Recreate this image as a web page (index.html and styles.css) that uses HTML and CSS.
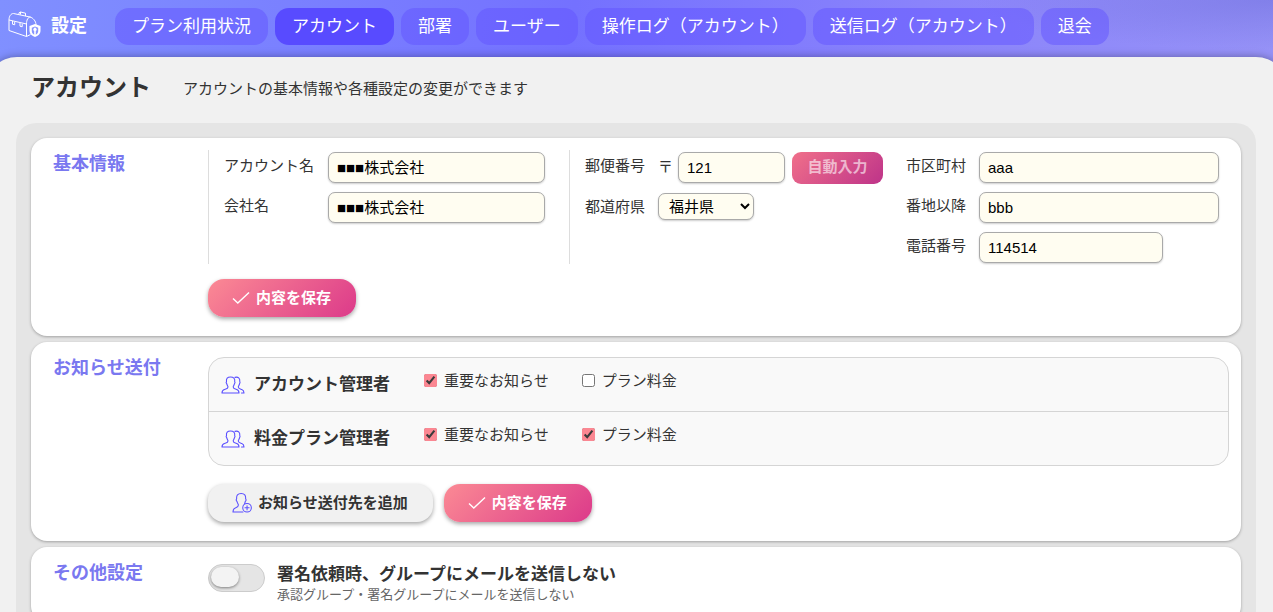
FILE: index.html
```html
<!DOCTYPE html>
<html lang="ja">
<head>
<meta charset="utf-8">
<title>設定 - アカウント</title>
<link rel="stylesheet" href="styles.css">
</head>
<body>
<svg class="defs" aria-hidden="true">
  <symbol id="check" viewBox="0 0 18 14"><path d="M1 7.500 5.800 12 17 1.500" fill="none" stroke="currentColor" stroke-width="1.400"/></symbol>
  <symbol id="users" viewBox="0 0 24 18">
    <g fill="none" stroke="currentColor" stroke-width="1.100" stroke-linejoin="round" stroke-linecap="round">
      <path d="M1 17c0-2 .8-3 2.500-3.500 2-.6 3.500-.8 3.500-2.500 0-1-1.200-2-1.200-3.200-.8-.6-.8-1.500-.3-2.200C5 2.500 6.500 1 9.500 1s4.700 1.500 4.200 4.600c.5.7.3 1.600-.3 2.200 0 1.200-1.200 2.200-1.200 3.200 0 1.700 1.500 1.900 3.500 2.500 1.600.5 2.300 1.500 2.300 3.500z"/>
      <path d="M14 1.400c3-.9 5.200.6 4.800 4.200.4.7.3 1.500-.3 2.200 0 1.200-1.200 2.200-1.200 3.200 0 1.700 1.800 1.900 3.500 2.500S23 15 23 17h-2.500"/>
    </g>
  </symbol>
  <symbol id="user-add" viewBox="0 0 21 22">
    <g fill="none" stroke="currentColor" stroke-width="1.100" stroke-linejoin="round" stroke-linecap="round">
      <path d="M11.500 20.500H1c0-3 1-4 3-4.600 1.800-.5 2.700-1 2.700-2.700C6.700 12 5.500 11 5.300 9.400c-.9-.7-1-2-.4-2.900C4.500 3 6 1 9.600 1s5 2 4.700 5.500c.6.9.5 2.200-.4 2.900 0 .8-.4 1.500-.7 2"/>
      <circle cx="15.800" cy="16" r="4.500"/><path d="M15.800 13.800v4.400M13.600 16H18"/>
    </g>
  </symbol>
</svg>

<header class="topbar">
  <div class="brand">
    <svg class="brand-icon" viewBox="0 0 33 27" aria-hidden="true">
      <g fill="none" stroke="currentColor" stroke-width="1" stroke-linejoin="round">
        <path d="M1 9v10.500l17.500 6V13z"/>
        <path d="M1 9C1 5 3 2.500 5.500 2.500L22 6c3 .8 6 4 6 8"/>
        <path d="M18.500 13c0-4 1.500-7 4-7M18.500 25.500l4-2"/>
        <path d="M11 3.500V1.800L12.500 1l5 1.200V5M12.500 1v2.500"/>
        <path d="M4.500 10v3.200l2.200.6v-3M12 12v3.200l2.200.6v-3"/>
      </g>
      <path d="m27 13 5.500 2v5c0 3-2.500 5-5.500 6-3-1-5.500-3-5.500-6v-5z" fill="currentColor"/>
      <path d="m27 15.500-3.200 1.200V20c0 1.700 1 3 2.400 3.700V20a1.700 1.700 0 1 1 1.600 0v3.700c1.400-.7 2.400-2 2.400-3.700v-3.300z" fill="#8795ff"/>
    </svg>
    <span>設定</span>
  </div>
  <nav class="tabs">
    <a class="tab" href="#">プラン利用状況</a>
    <a class="tab tab-active" href="#" aria-current="page">アカウント</a>
    <a class="tab" href="#">部署</a>
    <a class="tab" href="#">ユーザー</a>
    <a class="tab" href="#">操作ログ（アカウント）</a>
    <a class="tab" href="#">送信ログ（アカウント）</a>
    <a class="tab" href="#">退会</a>
  </nav>
</header>

<main class="panel">
  <div class="page-head">
    <h1>アカウント</h1>
    <p>アカウントの基本情報や各種設定の変更ができます</p>
  </div>

  <div class="cards">
    <section class="card">
      <h2>基本情報</h2>
      <form class="card-body">
        <div class="fields">
          <div class="field-col ruled names">
            <label for="account">アカウント名</label><input id="account" type="text" value="■■■株式会社">
            <label for="company">会社名</label><input id="company" type="text" value="■■■株式会社">
          </div>
          <div class="field-col ruled postal">
            <label for="zip">郵便番号</label>
            <div class="inline"><span>〒</span><input id="zip" type="text" value="121"><button class="autofill" type="button" disabled>自動入力</button></div>
            <label for="pref">都道府県</label>
            <div class="inline"><select id="pref"><option>福井県</option></select></div>
          </div>
          <div class="field-col address">
            <label for="city">市区町村</label><input id="city" type="text" value="aaa">
            <label for="street">番地以降</label><input id="street" type="text" value="bbb">
            <label for="tel">電話番号</label><input id="tel" class="tel" type="tel" value="114514">
          </div>
        </div>
        <div class="actions">
          <button class="btn btn-primary" type="button"><svg class="icon-check" aria-hidden="true"><use href="#check"/></svg><span>内容を保存</span></button>
        </div>
      </form>
    </section>

    <section class="card">
      <h2>お知らせ送付</h2>
      <div class="card-body">
        <ul class="recipients">
          <li class="recipient">
            <svg class="icon-users" aria-hidden="true"><use href="#users"/></svg>
            <span class="recipient-name">アカウント管理者</span>
            <div class="checks">
              <label class="check"><input type="checkbox" checked>重要なお知らせ</label>
              <label class="check"><input type="checkbox">プラン料金</label>
            </div>
          </li>
          <li class="recipient">
            <svg class="icon-users" aria-hidden="true"><use href="#users"/></svg>
            <span class="recipient-name">料金プラン管理者</span>
            <div class="checks">
              <label class="check"><input type="checkbox" checked>重要なお知らせ</label>
              <label class="check"><input type="checkbox" checked>プラン料金</label>
            </div>
          </li>
        </ul>
        <div class="actions">
          <button class="btn btn-plain" type="button"><svg class="icon-add" aria-hidden="true"><use href="#user-add"/></svg><span>お知らせ送付先を追加</span></button>
          <button class="btn btn-primary" type="button"><svg class="icon-check" aria-hidden="true"><use href="#check"/></svg><span>内容を保存</span></button>
        </div>
      </div>
    </section>

    <section class="card">
      <h2>その他設定</h2>
      <div class="card-body">
        <div class="option">
          <input id="group-mail" class="switch" type="checkbox" role="switch">
          <label for="group-mail"><strong>署名依頼時、グループにメールを送信しない</strong><small>承認グループ・署名グループにメールを送信しない</small></label>
        </div>
      </div>
    </section>
  </div>
</main>
</body>
</html>
```
FILE: styles.css
```css
* { box-sizing: border-box; }

body {
  display: flex;
  flex-direction: column;
  margin: 0;
  height: 100vh;
  overflow: hidden;
  font: 15px/22px "Noto Sans CJK JP", sans-serif;
  color: #333;
  background:
    radial-gradient(ellipse 300px 50px at 100% 0, rgba(110, 110, 220, .5), transparent),
    linear-gradient(95deg, #8090ff, #7471ff 45%, #8a83fb 72%, #9692f7) top / 100% 80px no-repeat #f1f1f1;
}

h1, h2, p, ul { margin: 0; padding: 0; }
.defs { position: absolute; width: 0; height: 0; }

.topbar {
  display: flex;
  align-items: flex-start;
  padding: 8px 8px 12px;
  color: #fff;
}

.brand {
  display: flex;
  align-items: center;
  gap: 10px;
  width: 107px;
  height: 32px;
  font-size: 18px;
  font-weight: 700;
}

.brand-icon { width: 33px; height: 27px; }

.tabs { display: flex; gap: 7px; }

.tab {
  padding: 5px 17px 8px;
  border-radius: 14px;
  background: rgba(98, 84, 255, .5);
  color: #fff;
  font-size: 17px;
  line-height: 24px;
  text-decoration: none;
  white-space: nowrap;
}

.tab-active { background: #584bff; }

.panel {
  flex: 1;
  min-height: 0;
  display: flex;
  flex-direction: column;
  margin: 0 -14px;
  padding: 13px 31px 0 30px;
  border-radius: 31px 31px 0 0;
  background: #f1f1f1;
  box-shadow: 0 0 8px rgba(0, 0, 0, .35);
}

.page-head {
  display: flex;
  flex: none;
  align-items: center;
  gap: 32px;
  padding: 0 15px 21px;
}

.page-head h1 { font-size: 24px; line-height: 32px; font-weight: 700; }
.page-head p { padding-top: 4px; }

.cards {
  flex: 1;
  min-height: 0;
  display: flex;
  flex-direction: column;
  gap: 6px;
  padding: 15px 15px 0;
  border-radius: 20px 20px 0 0;
  background: #e5e5e5;
  overflow: hidden;
}

.card {
  display: flex;
  flex: none;
  padding: 12px 12px 19px 22px;
  border-radius: 16px;
  background: #fff;
  box-shadow: 0 1px 3px rgba(0, 0, 0, .3);
}

.card h2 {
  flex: 0 0 155px;
  color: #7a78f0;
  font-size: 18px;
  line-height: 24px;
}

.card-body { flex: 1; }

.fields {
  display: grid;
  grid-template-columns: 361fr 337fr 323fr;
}

.field-col {
  display: grid;
  align-content: start;
  align-items: start;
  row-gap: 9px;
  min-height: 114px;
  padding-top: 2px;
}

.ruled { border-left: 1px solid #ddd; padding-left: 15px; }
.names { grid-template-columns: 104px 1fr; padding-right: 24px; }
.postal { grid-template-columns: 73px 1fr; padding-right: 23px; }
.address { grid-template-columns: 73px 1fr; padding-right: 10px; }
.field-col > label { padding-top: 2px; }

.inline { display: flex; align-items: flex-start; gap: 7px; }
.inline span { width: 13px; padding-top: 3px; }
.inline input { flex: 1; }

input[type="text"], input[type="tel"], select {
  min-width: 0;
  width: 100%;
  height: 31px;
  margin: 0;
  padding: 0 8px;
  border: 1px solid #a9a9a9;
  border-radius: 7px;
  background: #fffdf1;
  box-shadow: 0 1px 2px rgba(0, 0, 0, .2);
  color: #000;
  font: 15px "Liberation Sans", "Noto Sans CJK JP", sans-serif;
}

.names input { padding-bottom: 2px; }
.field-col .tel { width: 184px; }

select { width: 96px; height: 27px; padding: 0 0 0 6px; }

.autofill {
  flex: 0 0 91px;
  height: 32px;
  padding: 0 0 4px;
  border: 0;
  border-radius: 9px;
  background: linear-gradient(135deg, #f0708a, #be3389);
  color: rgba(255, 255, 255, .6);
  font: 700 15px/22px "Noto Sans CJK JP", sans-serif;
}

.actions { display: flex; gap: 11px; padding-top: 15px; }

.btn {
  display: flex;
  align-items: center;
  gap: 6px;
  height: 38px;
  padding: 0 25px 0 24px;
  border: 0;
  border-radius: 16px;
  box-shadow: 0 2px 4px rgba(0, 0, 0, .35);
  font: 700 15px/22px "Noto Sans CJK JP", sans-serif;
}

.btn span { padding-bottom: 3px; }
.btn-primary { background: linear-gradient(135deg, #fb8a94, #dc3a8a); color: #fff; }
.btn-plain { background: #f1f1f1; color: #333; }
.icon-check { width: 18px; height: 14px; }
.icon-add { width: 20px; height: 22px; color: #5a4fff; }
.icon-users { width: 24px; height: 18px; color: #5a4fff; }

.recipients {
  margin: 3px 0;
  border: 1px solid #d5d5d5;
  border-radius: 16px;
  background: #f9f9f9;
  list-style: none;
}

.recipient {
  display: flex;
  align-items: center;
  height: 53px;
  padding: 0 12px;
}

.recipient + .recipient { height: 54px; border-top: 1px solid #d5d5d5; }
.recipient-name { width: 170px; padding: 0 0 3px 9px; font-size: 17px; font-weight: 700; }
.checks { display: flex; gap: 33px; padding: 0 0 9px 9px; }
.check { display: flex; align-items: center; gap: 7px; }
.check input { width: 13px; height: 13px; margin: 0; accent-color: #fb8792; }

.option { display: flex; align-items: flex-start; gap: 12px; padding-top: 2px; }
.option label { display: flex; flex-direction: column; }
.option strong { font-size: 17px; line-height: 24px; font-weight: 700; }
.option small { color: #666; font-size: 13px; line-height: 18px; }

.switch {
  appearance: none;
  width: 57px;
  height: 28px;
  margin: 3px 0 0;
  padding: 2px;
  border: 1px solid #ccc;
  border-radius: 14px;
  background: #e5e5e5;
}

.switch::before {
  content: "";
  display: block;
  width: 28px;
  height: 20px;
  border-radius: 10px;
  background: #f3f3f3;
  box-shadow: 0 1px 3px rgba(0, 0, 0, .45);
}
```
